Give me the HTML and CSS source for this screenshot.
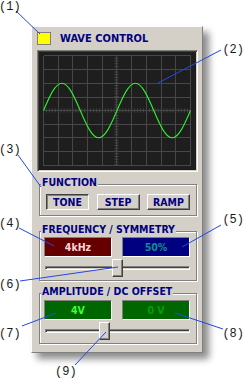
FILE: index.html
```html
<!DOCTYPE html>
<html lang="en">
<head>
	<meta charset="UTF-8">
	<meta name="viewport" content="width=device-width, initial-scale=1.0">
	<title>Wave Control</title>
	<link rel="stylesheet" href="styles.css">
</head>
<body>
	<div class="stage">
		<div class="panel">
			<div class="title-row">
				<span class="led"></span>
				<span class="title">WAVE CONTROL</span>
			</div>
			<!-- oscilloscope screen -->
			<div class="scope">
				<svg width="157" height="118" viewBox="0 0 157 118">
					<rect width="157" height="118" fill="#1e1e1e"/>
					<path class="grid" d="M4.5 3.5V113.5M19.5 3.5V113.5M33.5 3.5V113.5M48.5 3.5V113.5M63.5 3.5V113.5M77.5 3.5V113.5M92.5 3.5V113.5M107.5 3.5V113.5M122.5 3.5V113.5M136.5 3.5V113.5M151.5 3.5V113.5M4.5 3.5H151.5M4.5 17.5H151.5M4.5 31.5H151.5M4.5 45.5H151.5M4.5 58.5H151.5M4.5 72.5H151.5M4.5 85.5H151.5M4.5 99.5H151.5M4.5 113.5H151.5"/>
					<path class="ticks-h" d="M4 58.5H152"/>
					<path class="ticks-v" d="M77.5 3V114"/>
					<path class="wave" d="M4.5 58.5C10.49 44.51 16.23 31.2 22.88 31.2S35.26 44.51 41.25 58.5S52.98 85.8 59.63 85.8S72.01 72.49 78 58.5S89.73 31.2 96.38 31.2S108.76 44.51 114.75 58.5S126.48 85.8 133.13 85.8S145.51 72.49 151.5 58.5"/>
				</svg>
			</div>
			<div class="group group-function">
				<div class="group-label">FUNCTION</div>
				<div class="btn-row">
					<button class="btn pressed">TONE</button>
					<button class="btn">STEP</button>
					<button class="btn">RAMP</button>
				</div>
			</div>
			<div class="group group-freq">
				<div class="group-label">FREQUENCY / SYMMETRY</div>
				<div class="display-row">
					<div class="display red">4kHz</div>
					<div class="display blue">50%</div>
				</div>
				<div class="slider">
					<div class="track"></div>
					<div class="thumb" style="left: 67px"></div>
				</div>
			</div>
			<div class="group group-amp">
				<div class="group-label">AMPLITUDE / DC OFFSET</div>
				<div class="display-row">
					<div class="display green">4V</div>
					<div class="display green dim">0 V</div>
				</div>
				<div class="slider">
					<div class="track"></div>
					<div class="thumb" style="left: 54px"></div>
				</div>
			</div>
		</div>

		<!-- callout numbers -->
		<svg class="notes" width="244" height="378" viewBox="0 0 244 378">
			<g class="lines">
				<path d="M16 11L40 34"/>
				<path d="M221 50L158 83"/>
				<path d="M18 155L41 187"/>
				<path d="M19 228L54 246"/>
				<path d="M221 225L182 247"/>
				<path d="M20 281L118 267"/>
				<path d="M22 326L56 313"/>
				<path d="M223 329L175 313"/>
				<path d="M75 365L106 332"/>
			</g>
			<g class="nums">
				<text x="-1" y="10">(1)</text>
				<text x="244" y="53" class="end">(2)</text>
				<text x="-1" y="153">(3)</text>
				<text x="-1" y="227">(4)</text>
				<text x="244" y="223" class="end">(5)</text>
				<text x="-1" y="288">(6)</text>
				<text x="-1" y="337">(7)</text>
				<text x="244" y="337" class="end">(8)</text>
				<text x="55" y="375">(9)</text>
			</g>
		</svg>
	</div>
</body>
</html>
```

FILE: styles.css
```css
body {
	margin: 0;
	background: #fff;
}
.stage {
	position: relative;
	width: 244px; height: 378px;
	box-sizing: border-box;
	padding: 26px 0 0 31px;
	overflow: hidden;
	font-family: "DejaVu Sans Condensed", "DejaVu Sans", sans-serif;
	font-stretch: condensed;
}
.panel {
	width: 172px; height: 327px;
	box-sizing: border-box;
	padding: 4px 4px 0 5px;
	background: #d4d0c8;
	border: 1px solid; border-color: #fff #808080 #808080 #fff;
	box-shadow: 6px 6px 7px rgba(0, 0, 0, .45);
}
.title-row {
	display: flex; align-items: center;
	height: 14px;
}
.led {
	width: 12px; height: 11px;
	background: #ffff00;
	border: 1px solid #808080;
}
.title {
	margin-left: 9px;
	font-size: 11px; font-weight: bold; color: #000080;
}

/* scope */
.scope {
	width: 161px; height: 122px;
	box-sizing: border-box;
	margin-top: 5px;
	border: 1px solid; border-color: #808080 #fff #fff #808080;
	box-shadow: inset 1px 1px 0 #404040;
	padding: 1px 0 0 1px;
}
.scope svg { display: block; }
.grid { stroke: #474747; stroke-width: 1; fill: none; shape-rendering: crispEdges; }
.ticks-h { stroke: #474747; stroke-width: 4; stroke-dasharray: 1 1.94; fill: none; }
.ticks-v { stroke: #474747; stroke-width: 4; stroke-dasharray: 1 1.73; fill: none; }
.wave { stroke: #2ef02e; stroke-width: 1.1; fill: none; }

/* group boxes */
.group {
	width: 158px; box-sizing: border-box;
	margin-left: 2px;
	padding-bottom: 3px;
	border: 1px solid #808080;
	box-shadow: 1px 1px 0 #fff, inset 1px 1px 0 #fff;
}
.group-function { margin-top: 12px; padding-bottom: 5px; }
.group-freq { margin-top: 15px; }
.group-amp { margin-top: 12px; }
.group-label {
	display: table;
	margin: -9px 0 0 1px; padding: 0 1px;
	line-height: 12px;
	background: #d4d0c8;
	font-size: 10.5px; font-weight: bold; color: #000080;
}
.group-amp .display-row { margin-top: 3px; }

.btn-row {
	display: flex; justify-content: space-between;
	margin: 6px 6px 0 6px;
}
.btn {
	width: 43px; height: 16px; padding: 0;
	box-sizing: border-box;
	background: #d4d0c8;
	border: 1px solid; border-color: #fff #404040 #404040 #fff;
	box-shadow: inset -1px -1px 0 #808080;
	font-family: inherit; font-stretch: condensed;
	font-size: 10.5px; font-weight: bold; color: #000080;
}
.btn.pressed {
	border-color: #404040 #fff #fff #404040;
	box-shadow: inset 1px 1px 0 #808080;
}

.display-row {
	display: flex; gap: 10px;
	margin: 2px 6px 0 4px;
}
.display {
	width: 68px; height: 20px;
	box-sizing: border-box;
	border: 1px solid; border-color: #808080 #fff #fff #808080;
	text-align: center; line-height: 18px;
	font-size: 10.5px; font-weight: bold;
}
.red { background: #660000; color: #ffd4d4; }
.blue { background: #000080; color: #0e8e8e; }
.green { background: #006600; color: #3cff3c; }
.green.dim { color: #00a000; }

.slider {
	position: relative;
	height: 18px;
	margin: 2px 6px 0 5px;
}
.track {
	height: 4px; box-sizing: border-box;
	position: relative; top: 7px;
	border: 1px solid; border-color: #808080 #fff #fff #808080;
	box-shadow: inset 1px 1px 0 #404040;
}
.thumb {
	position: absolute; top: 0;
	width: 11px; height: 18px;
	box-sizing: border-box;
	background: #d4d0c8;
	border: 1px solid; border-color: #fff #404040 #404040 #fff;
	box-shadow: inset -1px -1px 0 #808080;
}

/* callouts */
.notes {
	position: absolute; top: 0; left: 0;
	pointer-events: none;
}
.lines path { stroke: #2447e8; stroke-width: 1; fill: none; }
.nums text {
	font-family: "Liberation Mono", monospace;
	font-size: 12px; fill: #1a1a1a;
}
.nums .end { text-anchor: end; }
```
